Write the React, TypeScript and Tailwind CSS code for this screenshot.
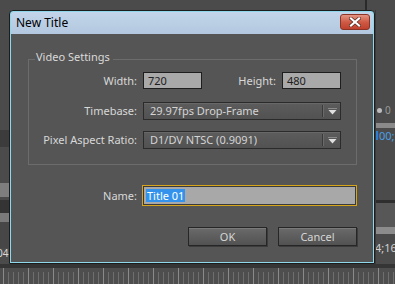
import React from "react";

function Ruler() {
  const ticks = [];
  for (let i = 0; i < 80; i++) {
    const x = 3 + i * 5;
    const long = i % 5 === 0;
    ticks.push(
      <line key={i} x1={x + 0.5} x2={x + 0.5} y1={long ? 4 : 8} y2={20} stroke={long ? "#8a8a8a" : "#6e6e6e"} strokeWidth={1} />
    );
  }
  return (
    <div className="h-[20px] flex flex-col">
      <div className="h-[4px] bg-[#353535]" />
      <svg width="395" height="16" viewBox="0 4 395 16" className="block bg-[#4e4e4e]">
        {ticks}
      </svg>
    </div>
  );
}

function LeftStrip() {
  return (
    <div className="w-[9px] flex flex-col text-[10px] leading-none overflow-hidden">
      <div className="h-[120px]" />
      <div className="h-[17px] bg-[#3c3c3c]" />
      <div className="h-[36px]" />
      <div className="h-[14px] bg-[#7e7e7e]" />
      <div className="h-[3px] bg-[#4a4a4a]" />
      <div className="h-[13px] bg-[#343434]" />
      <div className="h-[9px] bg-[#7a7a7a]" />
      <div className="h-[26px] bg-[#474747]" />
      <div className="h-[12px] text-[#d8d8d8] -ml-[3px]">04</div>
    </div>
  );
}

function RightStrip() {
  return (
    <div className="w-[20px] flex flex-col text-[10px] leading-none overflow-hidden border-l border-[#3a3a3a]">
      <div className="h-[95px]" />
      <div className="h-[10px] flex items-center gap-[3px] pl-[1px]">
        <span className="w-[5px] h-[5px] rounded-full bg-[#bdbdbd]" />
        <span className="text-[#9a9a9a]">0</span>
      </div>
      <div className="h-[8px]" />
      <div className="h-[5px] bg-[#8a8a8a]" />
      <div className="h-[14px] flex items-center text-[#4aa0e8] text-[11px]">
        <span className="w-[2px] h-[9px] bg-[#2a7fd0] mr-[1px]" />00;
      </div>
      <div className="h-[58px]" />
      <div className="h-[3px] bg-[#2e2e2e]" />
      <div className="h-[24px] bg-[#575757]" />
      <div className="h-[7px] bg-[#8c8c8c]" />
      <div className="h-[8px] bg-[#4a4a4a]" />
      <div className="h-[12px] text-[#d0d0d0] text-[11px] -ml-[1px]">4;16</div>
    </div>
  );
}

function Arrow() {
  return (
    <svg width="9" height="7" viewBox="0 0 9 7">
      <rect x="0" y="0" width="9" height="1" fill="#8a8a8a" />
      <polygon points="0.5,2 8.5,2 4.5,6.5" fill="#e0e0e0" />
    </svg>
  );
}

function Dropdown({ value }: { value: string }) {
  return (
    <div className="w-[198px] h-[18px] border border-[#2b2b2b] bg-gradient-to-b from-[#5c5c5c] to-[#525252] flex items-center shadow-[inset_0_1px_0_#686868]">
      <span className="flex-1 pl-[6px] text-[#d4d4d4] whitespace-nowrap">{value}</span>
      <div className="w-[1px] h-[12px] bg-[#3a3a3a]" />
      <div className="w-[1px] h-[12px] bg-[#6a6a6a]" />
      <div className="w-[16px] flex justify-center items-center">
        <Arrow />
      </div>
    </div>
  );
}

function Button({ label }: { label: string }) {
  return (
    <div className="w-[79px] h-[19px] border border-[#262626] bg-gradient-to-b from-[#6a6a6a] to-[#525252] shadow-[inset_0_1px_0_#7a7a7a,1px_1px_0_#3c3c3c] flex items-center justify-center text-[#d6d6d6]">
      {label}
    </div>
  );
}

function CloseButton() {
  return (
    <div className="self-start mt-[2px] w-[30px] h-[16px] rounded-[3px] border border-[#8a3526] bg-gradient-to-b from-[#e39483] via-[#cf5a45] to-[#c0412d] flex items-center justify-center">
      <svg width="12" height="10" viewBox="0 0 12 10">
        <path d="M2 1.5 L10 8.5 M10 1.5 L2 8.5" stroke="#5a2a22" strokeWidth="3.6" strokeLinecap="square" />
        <path d="M2 1.5 L10 8.5 M10 1.5 L2 8.5" stroke="#ffffff" strokeWidth="2.2" strokeLinecap="square" />
      </svg>
    </div>
  );
}

function Dialog() {
  return (
    <div className="w-[366px] h-[254px] border border-[#1c1c1c] rounded-t-[4px] bg-[#8fd8ec] p-px flex flex-col">
      <div className="h-[22px] rounded-t-[3px] bg-gradient-to-b from-[#c2d5ea] to-[#b3c8df] flex items-center justify-between pl-[5px] pr-[3px]">
        <span className="text-[12px] text-black leading-none">New Title</span>
        <CloseButton />
      </div>
      <div className="flex-1 bg-[#555555] flex flex-col text-[11px] leading-[14px] text-[#d8d8d8]">
        {/* Group box */}
        <div className="ml-[17px] mt-[16px] w-[329px] flex flex-col">
          <div className="h-[14px] flex">
            <div className="w-[7px] mt-[9px] border-t border-l border-[#6c6c6c]" />
            <span className="pl-[1px] pr-[3px] text-[#dadada]">Video Settings</span>
            <div className="flex-1 mt-[9px] border-t border-r border-[#6c6c6c]" />
          </div>
          <div className="border-l border-r border-b border-[#6c6c6c] pt-[8px] pb-[15px] flex flex-col">
            <div className="h-[17px] flex items-center">
              <span className="w-[108px] text-right">Width:</span>
              <div className="ml-[6px] w-[59px] h-[17px] border border-[#1e1e1e] bg-[#a9a9a9] text-[#202020] pl-[4px] flex items-center">720</div>
              <span className="w-[74px] text-right">Height:</span>
              <div className="ml-[6px] w-[59px] h-[17px] border border-[#1e1e1e] bg-[#a9a9a9] text-[#202020] pl-[4px] flex items-center">480</div>
            </div>
            <div className="h-[18px] mt-[13px] flex items-center">
              <span className="w-[108px] text-right">Timebase:</span>
              <div className="ml-[6px]">
                <Dropdown value="29.97fps Drop-Frame" />
              </div>
            </div>
            <div className="h-[18px] mt-[11px] flex items-center">
              <span className="w-[108px] text-right">Pixel Aspect Ratio:</span>
              <div className="ml-[6px]">
                <Dropdown value="D1/DV NTSC (0.9091)" />
              </div>
            </div>
          </div>
        </div>
        {/* Name */}
        <div className="mt-[20px] ml-[18px] h-[21px] flex items-center">
          <span className="w-[108px] text-right">Name:</span>
          <div className="ml-[5px] w-[215px] h-[21px] border border-[#d6a51c] shadow-[inset_0_0_0_1px_#3a3a3a] bg-[#a8a8a8] flex items-center pl-[3px]">
            <span className="bg-[#3393ec] text-white h-[13px] leading-[13px] px-[1px]">Title 01</span>
          </div>
        </div>
        {/* Buttons */}
        <div className="mt-[21px] pr-[16px] flex justify-end gap-[11px]">
          <Button label="OK" />
          <Button label="Cancel" />
        </div>
      </div>
    </div>
  );
}

export default function App() {
  return (
    <div className="w-[395px] h-[284px] bg-[#4b4b4b] flex flex-col overflow-hidden font-['Noto_Sans',sans-serif]">
      <div className="h-[10px] flex">
        <div className="w-[365px]" />
        <div className="w-[2px] bg-[#2a2a2a]" />
      </div>
      <div className="h-[254px] flex">
        <LeftStrip />
        <Dialog />
        <RightStrip />
      </div>
      <Ruler />
    </div>
  );
}
